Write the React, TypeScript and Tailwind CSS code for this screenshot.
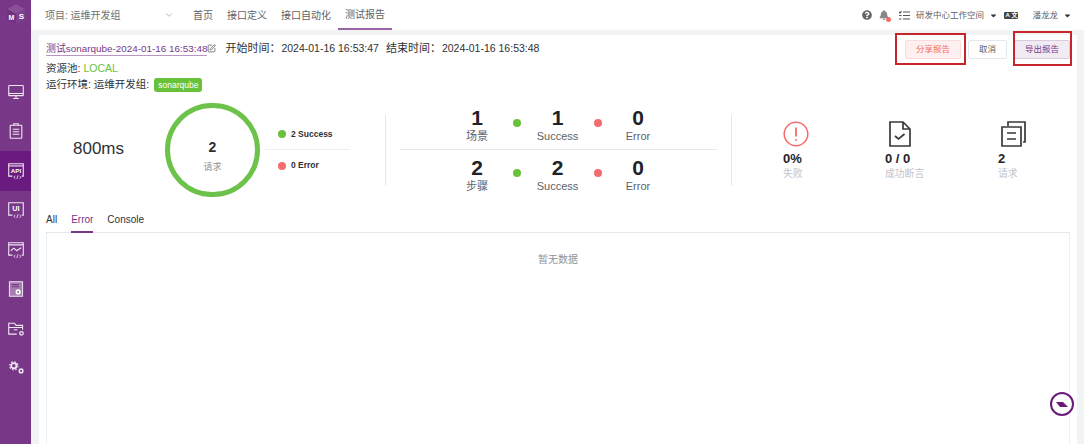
import { FaBell, FaCaretDown, FaQuestionCircle } from 'react-icons/fa';
import { ChevronDown, SquarePen } from 'lucide-react';

const font = { fontFamily: '"Liberation Sans", "Noto Sans CJK SC", sans-serif' };

function CodeTag() {
  return <path d="M10 18l-2 1.7 2 1.7M16 18l2 1.7-2 1.7M13.8 17l-1.6 5" strokeWidth="1.2" />;
}

function Icon({ children }: { children: React.ReactNode }) {
  return (
    <svg width="16" height="16" viewBox="0 0 22 22" fill="none" stroke="#f1e6f3" strokeWidth="1.5" className="overflow-visible">
      {children}
    </svg>
  );
}

const sideIcons = [
  <Icon key="a">
    <rect x="1" y="2" width="20" height="14" rx="1" />
    <path d="M1 13h20M7 20h8M11 16v4" />
  </Icon>,
  <Icon key="b">
    <rect x="3" y="3" width="16" height="18" rx="1" />
    <path d="M8 3V1h6v2M6.5 8.5h9M6.5 12h9M6.5 15.5h9" />
  </Icon>,
  <Icon key="c">
    <path d="M6 18H1V1h20v17h-2" />
    <path d="M1 4h20" />
    <text x="11" y="13.5" textAnchor="middle" fontSize="8.5" fontWeight="700" fill="#fff" stroke="none" style={font}>
      API
    </text>
    <CodeTag />
  </Icon>,
  <Icon key="d">
    <path d="M6 18H1V1h20v17h-2" />
    <text x="11" y="13" textAnchor="middle" fontSize="10" fontWeight="700" fill="#fff" stroke="none" style={font}>
      UI
    </text>
    <CodeTag />
  </Icon>,
  <Icon key="e">
    <path d="M6 18H1V1h20v17h-2" />
    <path d="M1 4h20M4 12l4-3.5 4 3.5 6-4" />
    <CodeTag />
  </Icon>,
  <Icon key="f">
    <rect x="2" y="1" width="18" height="20" fill="#a67fb1" stroke="#e6d8e9" />
    <path d="M5 5h10M5 8h10" stroke="#783887" />
    <circle cx="14" cy="15" r="3.6" fill="#fff" stroke="none" />
    <circle cx="14" cy="15" r="1.2" fill="#783887" stroke="none" />
  </Icon>,
  <Icon key="g">
    <path d="M12 18H1V3h8l2 3h9v6" />
    <path d="M1 9h19M8 12h5" />
    <circle cx="18.5" cy="17" r="2.4" strokeWidth="1.8" />
  </Icon>,
  <Icon key="h">
    <circle cx="8" cy="8" r="3.6" strokeWidth="2.4" />
    <circle cx="8" cy="8" r="5.6" strokeWidth="1.6" strokeDasharray="2.2 2.2" />
    <circle cx="18" cy="15" r="2.5" strokeWidth="2" />
  </Icon>,
];

function Legend({ color, label }: { color: string; label: string }) {
  return (
    <div className="flex h-[31px] items-center gap-[5px] pl-[13px] text-[8.5px] font-bold text-[#303133]">
      <span className={`h-2 w-2 rounded-full ${color}`} />
      {label}
    </div>
  );
}

function CountRow({ value, label, ok, bad }: { value: number; label: string; ok: number; bad: number }) {
  const Cell = ({ n, t }: { n: number; t: string }) => (
    <div className="flex w-10 flex-col items-center">
      <span className="text-[21px] leading-[24px] font-bold text-[#1f2329]">{n}</span>
      <span className="text-[11px] leading-[13px] whitespace-nowrap text-[#606266]">{t}</span>
    </div>
  );
  return (
    <div className="flex h-[50px] items-start pt-[6px] pl-[57px]">
      <Cell n={value} t={label} />
      <div className="flex h-[34px] w-[1px] flex-1 items-center justify-center">
        <span className="h-2 w-2 rounded-full bg-[#67c23a]" />
      </div>
      <Cell n={ok} t="Success" />
      <div className="flex h-[34px] w-[1px] flex-1 items-center justify-center">
        <span className="h-2 w-2 rounded-full bg-[#f56c6c]" />
      </div>
      <Cell n={bad} t="Error" />
      <div className="w-[59px]" />
    </div>
  );
}

function Metric({ icon, value, label, width }: { icon: React.ReactNode; value: string; label: string; width: string }) {
  return (
    <div className={`flex flex-col ${width}`}>
      <div className="flex h-[27px] items-center">{icon}</div>
      <span className="mt-[4px] text-[13px] leading-[15px] font-bold text-[#1f2329]">{value}</span>
      <span className="mt-[1px] text-[9.8px] leading-[13px] whitespace-nowrap text-[#c0c4cc]">{label}</span>
    </div>
  );
}

export default function App() {
  return (
    <div className="flex h-[444px] w-[1084px] overflow-hidden bg-[#f2f3f5] text-[10.5px] text-[#303133]" style={font}>
      <aside className="flex w-[31px] shrink-0 flex-col items-center bg-[#783887]">
        <div className="flex h-[72px] w-full justify-center pt-[4px]">
          <svg width="20" height="20" viewBox="0 0 20 20">
            <path d="M10 0l9 5-9 5-9-5z" fill="#8a4f98" />
            <path d="M1 5l9 5v10l-9-5z" fill="#6f3080" />
            <path d="M19 5l-9 5v10l9-5z" fill="#7d4090" />
            <text x="5.5" y="16" textAnchor="middle" fontSize="7" fontWeight="700" fill="#fff" style={font}>
              M
            </text>
            <text x="15.5" y="15" textAnchor="middle" fontSize="8" fontWeight="700" fill="#fff" style={font}>
              S
            </text>
          </svg>
        </div>
        {sideIcons.map((icon, i) => (
          <div key={i} className={`flex h-[39.5px] w-full items-center justify-center ${i === 2 ? 'bg-[#6a1b80]' : ''}`}>
            {icon}
          </div>
        ))}
      </aside>

      <main className="flex min-w-0 flex-1 flex-col">
        <header className="flex h-[30px] shrink-0 items-center bg-white text-[10px] text-[#606266]">
          <span className="ml-[14px] w-[119px] text-[#707070]">项目: 运维开发组</span>
          <ChevronDown size={10} className="text-[#a8abb2]" />
          <nav className="ml-[19px] flex h-full items-center">
            <span className="mr-[14px]">首页</span>
            <span className="mr-[14px]">接口定义</span>
            <span className="mr-[7px]">接口自动化</span>
            <span className="flex h-full items-center border-b-2 border-[#9a65a5] px-[7px]">测试报告</span>
          </nav>
          <div className="ml-auto flex items-center pr-[12px] text-[8.5px]">
            <FaQuestionCircle size={10} className="text-[#666]" />
            <span className="relative ml-[7px]">
              <FaBell size={10} className="text-[#888]" />
              <span className="absolute -right-[2px] -bottom-[2px] h-[5px] w-[5px] rounded-full bg-[#f56c6c]" />
            </span>
            <svg width="11" height="9" viewBox="0 0 11 9" className="ml-[10px]" stroke="#555" strokeWidth="1.2">
              <path d="M4 1h7M4 4.5h7M4 8h7M0 1l1 1 1.5-2M0 4.5h2.5M0 8h2.5" fill="none" />
            </svg>
            <span className="ml-[6px]">研发中心工作空间</span>
            <FaCaretDown size={9} className="ml-[5px] text-[#333]" />
            <span className="ml-[6.5px] flex h-[7px] w-[14px] items-center justify-between rounded-[1px] bg-[#444] px-[1px] text-[6px] leading-none font-bold text-white">
              <span>A</span>
              <span>文</span>
            </span>
            <span className="ml-[14px]">潘龙龙</span>
            <FaCaretDown size={9} className="ml-[5px] text-[#333]" />
          </div>
        </header>

        <div className="flex min-h-0 flex-1 pt-[5px] pr-[7px] pl-2">
          <section className="flex min-w-0 flex-1 flex-col bg-white px-[7px]">
            <div className="flex h-[65px] shrink-0 justify-between">
              <div className="flex flex-col pt-[6px]">
                <div className="flex h-[15px] items-center whitespace-nowrap">
                  <span className="border-b border-[#b896c0] text-[9.9px] leading-[13px] text-[#783887]">测试sonarqube-2024-01-16 16:53:48</span>
                  <SquarePen size={9} className="text-[#555]" />
                  <span className="ml-[9px] w-[56px] text-[11px]">开始时间：</span>
                  <span>2024-01-16 16:53:47</span>
                  <span className="ml-[7px] w-[56px] text-[11px]">结束时间：</span>
                  <span>2024-01-16 16:53:48</span>
                </div>
                <div className="mt-[5px] flex h-[15px] items-center">
                  资源池:<span className="ml-[3px] text-[#67c23a]">LOCAL</span>
                </div>
                <div className="mt-[1px] flex h-[16px] items-center">
                  运行环境: 运维开发组:
                  <span className="ml-[5px] rounded-[3px] bg-[#67c23a] px-[4px] py-[1.5px] text-[8.5px] leading-[11px] text-white">sonarqube</span>
                </div>
              </div>
              <div className="flex items-start gap-[7px] pt-[5px] text-[8.5px]">
                <div className="relative">
                  <button className="h-[19px] w-[56px] rounded-[2px] border border-[#fbdcdc] bg-[#fef0f0] text-[#f56c6c]">分享报告</button>
                  <span className="pointer-events-none absolute -top-[7px] -right-[5px] -bottom-[6px] -left-[10px] border-2 border-[#c8242b]" />
                </div>
                <button className="h-[19px] w-[39px] rounded-[2px] border border-[#e4e7ed] bg-white text-[#606266]">取消</button>
                <div className="relative">
                  <button className="h-[19px] w-[56px] rounded-[2px] border border-[#dcc9e1] bg-[#f1ebf3] text-[#783887]">导出报告</button>
                  <span className="pointer-events-none absolute -top-[9px] -right-[2px] -bottom-[7px] -left-[1px] border-2 border-[#c8242b]" />
                </div>
              </div>
            </div>

            <div className="flex h-[100px] shrink-0 items-center">
              <div className="-mt-[2px] w-[119px] shrink-0 pl-[27px] text-[17px] text-[#303133]">800ms</div>
              <div className="flex h-[94px] w-[95px] shrink-0 flex-col items-center justify-center rounded-full border-[5px] border-[#6cc24a]">
                <span className="mt-[11px] text-[14px] leading-[18px] font-bold">2</span>
                <span className="mt-[5px] text-[9px] leading-[12px] text-[#909399]">请求</span>
              </div>
              <div className="ml-[5px] w-[85px] shrink-0 divide-y divide-[#ebeef5]">
                <Legend color="bg-[#67c23a]" label="2 Success" />
                <Legend color="bg-[#f56c6c]" label="0 Error" />
              </div>
              <div className="ml-[35px] h-[71px] w-px shrink-0 bg-[#e4e7ed]" />
              <div className="ml-[14px] w-[317px] shrink-0 divide-y divide-[#e4e7ed]">
                <CountRow value={1} label="场景" ok={1} bad={0} />
                <CountRow value={2} label="步骤" ok={2} bad={0} />
              </div>
              <div className="ml-[14px] h-[71px] w-px shrink-0 bg-[#e4e7ed]" />
              <div className="ml-[51px] flex shrink-0">
                <Metric
                  width="w-[102px]"
                  value="0%"
                  label="失败"
                  icon={
                    <svg width="26" height="26" viewBox="0 0 26 26" fill="none" stroke="#f56c6c" strokeWidth="1.5">
                      <circle cx="13" cy="13" r="11.8" />
                      <path d="M13 6.5v9" strokeWidth="1.8" />
                      <circle cx="13" cy="19" r="1" fill="#f56c6c" stroke="none" />
                    </svg>
                  }
                />
                <Metric
                  width="w-[113px]"
                  value="0 / 0"
                  label="成功断言"
                  icon={
                    <svg width="24" height="26" viewBox="0 0 24 26" fill="none" stroke="#3a3a3a" strokeWidth="1.7" className="ml-[3px]">
                      <path d="M2 1h13l7 7v17H2zM15 1v7h7" />
                      <path d="M7 15l3.5 3 6-5" />
                    </svg>
                  }
                />
                <Metric
                  width="w-[60px]"
                  value="2"
                  label="请求"
                  icon={
                    <svg width="26" height="26" viewBox="0 0 26 26" fill="none" stroke="#3a3a3a" strokeWidth="1.7" className="ml-[2px]">
                      <path d="M8 5V1h17v20h-2" />
                      <path d="M2 6h19v19H2zM7 12h9M7 18h9" />
                    </svg>
                  }
                />
              </div>
            </div>

            <div className="flex h-[33px] shrink-0 items-end gap-[14px] border-b border-[#e4e7ed] text-[10px]">
              <span className="pb-[6px] leading-[12px]">All</span>
              <span className="-mb-px border-b-2 border-[#783887] pb-[5px] leading-[12px] text-[#783887]">Error</span>
              <span className="pb-[6px] leading-[12px]">Console</span>
            </div>
            <div className="min-h-0 flex-1 border-x border-[#ebeef5] pt-[19px] text-center text-[10px] text-[#909399]">暂无数据</div>
          </section>
        </div>
      </main>

      <div className="absolute top-[392px] left-[1050px] flex h-[24px] w-[24px] items-center justify-center rounded-full border-[2.5px] border-[#6a1b7a] bg-white">
        <svg width="12" height="7" viewBox="0 0 12 7">
          <path d="M0 1h7l5 5H4z" fill="#6a1b7a" />
        </svg>
      </div>
    </div>
  );
}
